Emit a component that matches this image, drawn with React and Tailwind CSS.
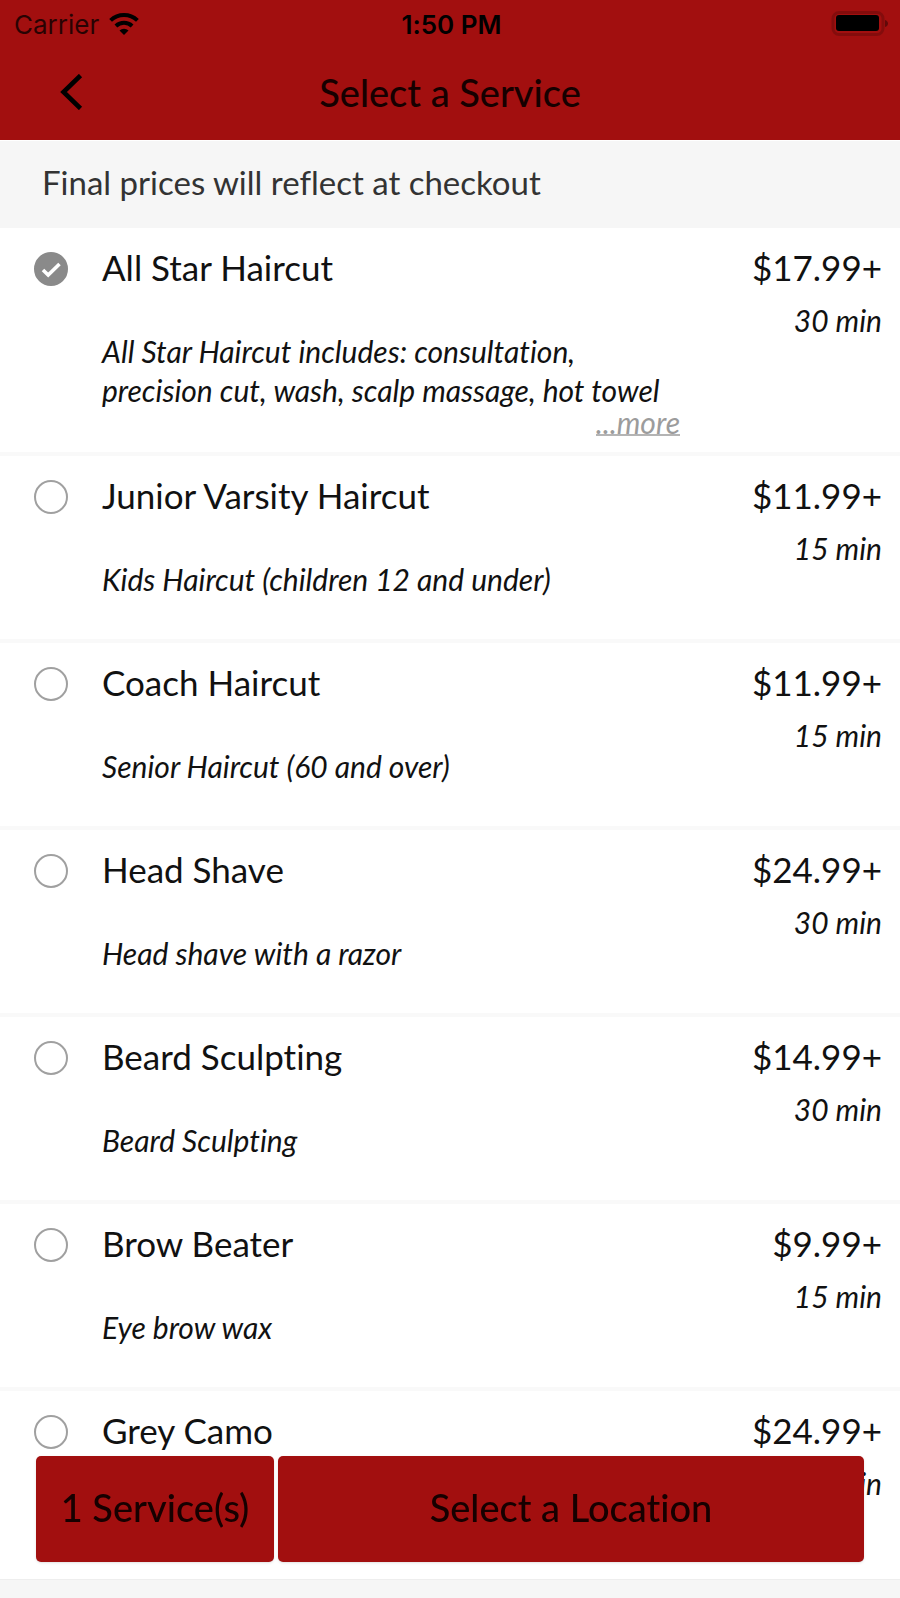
import { useState } from 'react'

const SERVICES = [
  {
    id: 'all-star',
    name: 'All Star Haircut',
    price: '$17.99+',
    duration: '30 min',
    description: 'All Star Haircut includes: consultation, precision cut, wash, scalp massage, hot towel',
    more: true,
  },
  { id: 'junior-varsity', name: 'Junior Varsity Haircut', price: '$11.99+', duration: '15 min', description: 'Kids Haircut (children 12 and under)' },
  { id: 'coach', name: 'Coach Haircut', price: '$11.99+', duration: '15 min', description: 'Senior Haircut (60 and over)' },
  { id: 'head-shave', name: 'Head Shave', price: '$24.99+', duration: '30 min', description: 'Head shave with a razor' },
  { id: 'beard', name: 'Beard Sculpting', price: '$14.99+', duration: '30 min', description: 'Beard Sculpting' },
  { id: 'brow', name: 'Brow Beater', price: '$9.99+', duration: '15 min', description: 'Eye brow wax' },
  { id: 'grey-camo', name: 'Grey Camo', price: '$24.99+', duration: '30 min' },
]

function StatusBar() {
  return (
    <div className="grid h-12 grid-cols-[1fr_auto_1fr] items-center pl-[14px] pr-[11px] font-['Inter',sans-serif] text-[26px] text-black">
      <div className="flex items-center gap-[10px]">
        <span className="opacity-75">Carrier</span>
        <svg viewBox="0 0 30 22" className="h-[22px] w-[30px]" aria-hidden="true">
          <g fill="none" stroke="currentColor" strokeWidth="4">
            <path d="M1.6 7.4a19.4 19.4 0 0 1 26.8 0" />
            <path d="M6.9 13a11.9 11.9 0 0 1 16.2 0" />
          </g>
          <path d="M15 22l-4.500-4.500a6.500 6.500 0 0 1 9 0z" fill="currentColor" />
        </svg>
      </div>
      <span className="text-center font-semibold">1:50 PM</span>
      <svg viewBox="0 0 58 26" className="h-[26px] w-[58px] justify-self-end" aria-hidden="true">
        <rect x="2" y="1.5" width="50" height="22" rx="6" fill="none" stroke="currentColor" strokeOpacity="0.18" strokeWidth="3" />
        <rect x="5" y="4" width="43" height="16" rx="3" fill="currentColor" />
        <path d="M54 9c4 1 4 6 0 7z" fill="currentColor" fillOpacity="0.4" />
      </svg>
    </div>
  )
}

function Header() {
  return (
    <header className="bg-[#a20f0f] text-[#160000]">
      <StatusBar />
      <div className="grid h-[92px] grid-cols-[1fr_auto_1fr] items-center pb-1">
        <button type="button" aria-label="Back" className="ml-14 w-9 py-2 text-black">
          <svg viewBox="0 0 36 36" className="size-9" fill="none" stroke="currentColor" strokeWidth="4.6" aria-hidden="true">
            <path d="M24.5 1.5L7.5 18l17 16.5" />
          </svg>
        </button>
        <h1 className="text-[38px] leading-none font-medium">Select a Service</h1>
      </div>
    </header>
  )
}

function ServiceRow({ service, checked, onToggle }) {
  return (
    <li className="flex min-h-[187px] items-start border-b-4 border-[#f9f9f9] pt-[18px] pr-[18px] pl-[34px] last:min-h-[189px] last:border-b last:border-[#eee]">
      <div className="relative mt-[6px] mr-[34px] size-[34px] shrink-0">
        <input
          id={service.id}
          type="checkbox"
          checked={checked}
          onChange={onToggle}
          className="peer block size-full appearance-none rounded-full border-2 border-[#a0a0a0] checked:border-[#8a8a8a] checked:bg-[#8a8a8a]"
        />
        <svg viewBox="0 0 34 34" className="pointer-events-none absolute inset-0 hidden peer-checked:block" fill="none" stroke="white" strokeWidth="3.6" aria-hidden="true">
          <path d="M9 18l5.2 5L25.5 12" />
        </svg>
      </div>
      <div className="min-w-0 flex-1">
        <label htmlFor={service.id} className="block text-[35px] leading-[42px]">
          {service.name}
        </label>
        {service.description && (
          <p className="mt-11 max-w-[580px] text-[30px] leading-[39px] italic">{service.description}</p>
        )}
        {service.more && (
          <div className="flex max-w-[578px] justify-end">
            <a href="#more" className="mb-4 border-b-2 border-[#b4b4b4] text-[30px] leading-6 text-[#9c9c9c] italic">
              ...more
            </a>
          </div>
        )}
      </div>
      <div className="shrink-0 text-right">
        <p className="text-[35px] leading-[42px]">{service.price}</p>
        <p className="mt-[14px] text-[30px] leading-9 italic">{service.duration}</p>
      </div>
    </li>
  )
}

export default function App() {
  const [selected, setSelected] = useState(['all-star'])

  function toggle(id) {
    setSelected(prev => (prev.includes(id) ? prev.filter(s => s !== id) : [...prev, id]))
  }

  return (
    <div className="relative min-h-screen bg-[#f6f6f6] font-['Lato',sans-serif] text-[#111] [font-variant-ligatures:none]">
      <Header />
      <p className="flex h-22 items-center border-t border-white px-[42px] pb-1 text-[33px] text-[#333]">
        Final prices will reflect at checkout
      </p>

      <ul className="bg-white">
        {SERVICES.map(service => (
          <ServiceRow
            key={service.id}
            service={service}
            checked={selected.includes(service.id)}
            onToggle={() => toggle(service.id)}
          />
        ))}
      </ul>

      {/* Booking actions, floating over the list */}
      <div className="fixed inset-x-9 bottom-9 flex h-[106px] gap-1 text-[38px] font-medium text-[#160000]">
        <button type="button" className="w-[238px] rounded-[5px] bg-[#a20f0f] pb-1 shadow-sm">
          {selected.length} Service(s)
        </button>
        <button type="button" className="flex-1 rounded-[5px] bg-[#a20f0f] pb-1 shadow-sm">
          Select a Location
        </button>
      </div>
    </div>
  )
}
